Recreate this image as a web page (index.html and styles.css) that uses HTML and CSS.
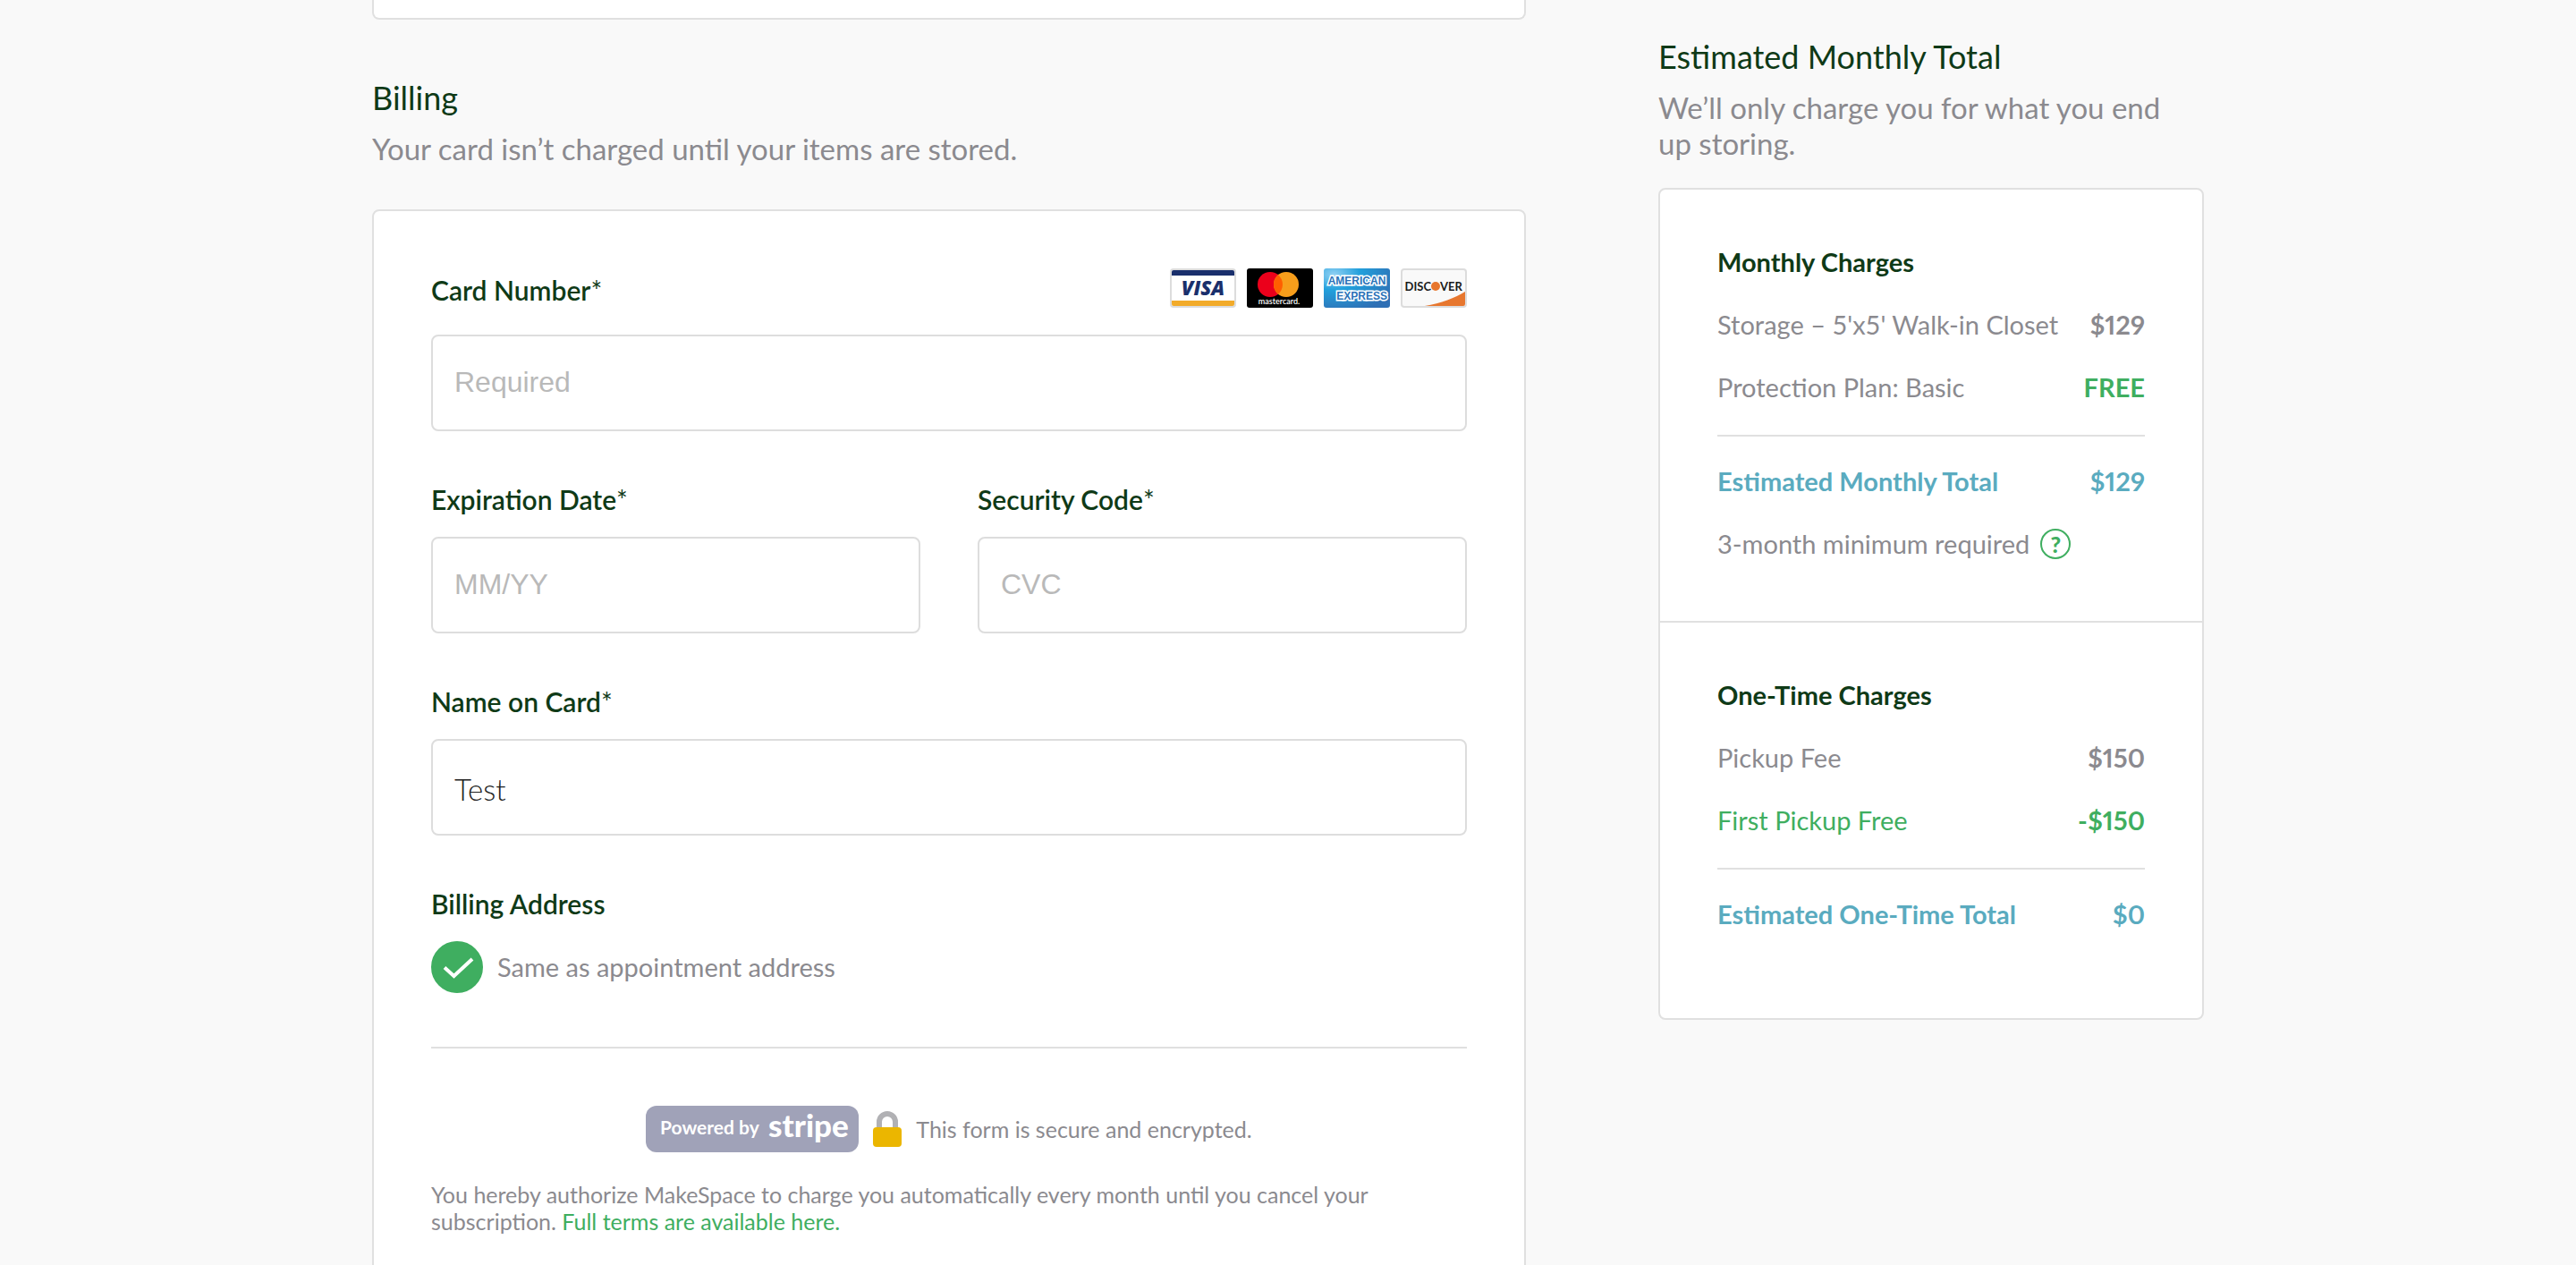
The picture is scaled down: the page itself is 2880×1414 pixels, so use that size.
FILE: index.html
```html
<!DOCTYPE html>
<html lang="en">
<head>
<meta charset="utf-8">
<meta name="viewport" content="width=device-width, initial-scale=1">
<title>Billing</title>
<link rel="stylesheet" href="styles.css">
</head>
<body>
<div class="page">
  <main class="main">
    <div class="card card-previous"></div>
    <section class="section">
      <h2 class="title">Billing</h2>
      <p class="subtitle">Your card isn’t charged until your items are stored.</p>
      <form class="card billing">
        <div class="label-row">
          <label class="label" for="number">Card Number<span class="star">*</span></label>
          <div class="brands">
            <svg width="74" height="44" viewBox="0 0 74 44" role="img" aria-label="Visa">
              <rect width="74" height="44" rx="4" fill="#dcdcdc"/>
              <rect x="2" y="2" width="70" height="40" rx="2" fill="#fff"/>
              <path d="M4 2h66a2 2 0 0 1 2 2v4H2V4a2 2 0 0 1 2-2z" fill="#1a2f6c"/>
              <path d="M2 36h70v4a2 2 0 0 1-2 2H4a2 2 0 0 1-2-2z" fill="#f2ab2a"/>
              <text class="visa" x="37" y="30" text-anchor="middle">VISA</text>
            </svg>
            <svg width="74" height="44" viewBox="0 0 74 44" role="img" aria-label="Mastercard">
              <rect width="74" height="44" rx="3" fill="#000"/>
              <circle cx="26" cy="18" r="14" fill="#eb001b"/>
              <circle cx="44" cy="18" r="14" fill="#f79e1b"/>
              <path d="M35 7.300a14 14 0 0 1 0 21.400a14 14 0 0 1 0-21.400z" fill="#ff5f00"/>
              <text class="mastercard" x="36" y="40" text-anchor="middle">mastercard.</text>
            </svg>
            <svg width="74" height="44" viewBox="0 0 74 44" role="img" aria-label="American Express">
              <defs>
                <radialGradient id="amex" cx="0.150" cy="0.150" r="1">
                  <stop offset="0" stop-color="#8fd0f3"/>
                  <stop offset="0.400" stop-color="#22a0dc"/>
                  <stop offset="1" stop-color="#2f6fb4"/>
                </radialGradient>
              </defs>
              <rect width="74" height="44" rx="3" fill="url(#amex)"/>
              <text class="amex" x="37" y="18" text-anchor="middle">AMERICAN</text>
              <text class="amex" x="71" y="35" text-anchor="end">EXPRESS</text>
            </svg>
            <svg width="74" height="44" viewBox="0 0 74 44" role="img" aria-label="Discover">
              <rect width="74" height="44" rx="4" fill="#dcdcdc"/>
              <rect x="2" y="2" width="70" height="40" rx="2" fill="#f9f9f9"/>
              <path d="M27 42C45 39 61 33 72 26v14a2 2 0 0 1-2 2z" fill="#e7772f"/>
              <text class="discover" x="34" y="25" text-anchor="end">DISC</text>
              <circle cx="39" cy="20" r="5" fill="#e7772f"/>
              <text class="discover" x="44" y="25">VER</text>
            </svg>
          </div>
        </div>
        <input class="input input-first" id="number" type="text" placeholder="Required">

        <div class="pair">
          <div>
            <label class="label" for="expiry">Expiration Date<span class="star">*</span></label>
            <input class="input" id="expiry" type="text" placeholder="MM/YY">
          </div>
          <div>
            <label class="label" for="cvc">Security Code<span class="star">*</span></label>
            <input class="input" id="cvc" type="text" placeholder="CVC">
          </div>
        </div>

        <div class="group">
          <label class="label" for="name">Name on Card<span class="star">*</span></label>
          <input class="input input-name" id="name" type="text" value="Test">
        </div>

        <fieldset class="group address">
          <legend class="label">Billing Address</legend>
          <label class="check-row">
            <span class="check">
              <input class="check-input" type="checkbox" checked>
              <svg class="check-mark" width="58" height="58" viewBox="0 0 58 58" aria-hidden="true">
                <path d="M15 29.500l10.500 9.500L46 20" fill="none" stroke="#fff" stroke-width="4"/>
              </svg>
            </span>
            Same as appointment address
          </label>
        </fieldset>

        <hr class="rule form-rule">

        <div class="secure">
          <svg width="238" height="52" viewBox="0 0 238 52" role="img" aria-label="Powered by Stripe">
            <rect width="238" height="52" rx="12" fill="#a0a2b8"/>
            <text class="powered" x="16" y="32">Powered by</text>
            <text class="stripe" x="137" y="35">stripe</text>
          </svg>
          <svg width="32" height="40" viewBox="0 0 32 40" aria-hidden="true">
            <path d="M7 20V12a9 9 0 0 1 18 0v8" fill="none" stroke="#b1b1b4" stroke-width="6"/>
            <rect y="18" width="32" height="22" rx="4" fill="#ebb600"/>
          </svg>
          <span>This form is secure and encrypted.</span>
        </div>
        <p class="terms">You hereby authorize MakeSpace to charge you automatically every month until you cancel your subscription. <a class="link" href="#terms">Full terms are available here.</a></p>
      </form>
    </section>
  </main>

  <aside class="aside">
    <h2 class="title">Estimated Monthly Total</h2>
    <p class="subtitle">We’ll only charge you for what you end up storing.</p>
    <div class="card summary">
      <section class="charges">
        <h3 class="charges-title">Monthly Charges</h3>
        <dl class="rows">
          <div class="row"><dt>Storage – 5'x5' Walk-in Closet</dt><dd>$129</dd></div>
          <div class="row"><dt>Protection Plan: Basic</dt><dd class="green">FREE</dd></div>
        </dl>
        <hr class="rule">
        <dl class="rows">
          <div class="row total"><dt>Estimated Monthly Total</dt><dd>$129</dd></div>
        </dl>
        <p class="minimum">3-month minimum required <button class="help" type="button" aria-label="About the minimum">?</button></p>
      </section>
      <section class="charges charges-once">
        <h3 class="charges-title">One-Time Charges</h3>
        <dl class="rows">
          <div class="row"><dt>Pickup Fee</dt><dd>$150</dd></div>
          <div class="row green"><dt>First Pickup Free</dt><dd>-$150</dd></div>
        </dl>
        <hr class="rule">
        <dl class="rows">
          <div class="row total"><dt>Estimated One-Time Total</dt><dd>$0</dd></div>
        </dl>
      </section>
    </div>
  </aside>
</div>
</body>
</html>
```
FILE: styles.css
```css
*, *::before, *::after { box-sizing: border-box; }

body {
  margin: 0;
  background: #f9f9f9;
  color: #8b8a8f;
  font-family: Lato, "Liberation Sans", sans-serif;
  font-size: 29px;
  line-height: 40px;
}

h2, h3, p, dl, dd, fieldset, legend { margin: 0; padding: 0; }
fieldset { border: 0; min-width: 0; }

.page {
  display: grid;
  grid-template-columns: minmax(0, 1290fr) minmax(0, 610fr);
  column-gap: 148px;
  max-width: 2048px;
  height: 100vh;
  margin: 0 auto;
  overflow: hidden;
}

.card {
  background: #fff;
  border: 2px solid #e0e0e0;
  border-radius: 8px;
}

.card-previous {
  height: 22px;
  border-top: 0;
  border-radius: 0 0 8px 8px;
}

.section { padding-top: 63px; }
.aside { padding-top: 39px; }

.title {
  color: #0f3a17;
  font-size: 36px;
  font-weight: 400;
  line-height: 48px;
}

.subtitle {
  margin-top: 13px;
  font-size: 33px;
}

.aside .subtitle { padding-right: 32px; }

/* Billing form */
.billing {
  margin-top: 48px;
  padding: 64px;
}

.label-row {
  display: flex;
  align-items: flex-end;
  justify-content: space-between;
}

.label {
  display: block;
  color: #0f3a17;
  font-size: 30px;
  font-weight: 600;
}

.star { font-weight: 400; }

.brands {
  display: flex;
  gap: 12px;
}

.input {
  display: block;
  width: 100%;
  height: 108px;
  margin-top: 22px;
  padding: 0 24px 2px;
  background: #fff;
  border: 2px solid #ddd;
  border-radius: 8px;
  color: #222;
  font-family: "Liberation Sans", Arial, sans-serif;
  font-size: 32px;
}

.input::placeholder { color: #b9b9b9; opacity: 1; }
.input-first { margin-top: 30px; }

.input-name {
  padding-top: 6px;
  font-family: Lato, sans-serif;
  font-size: 33px;
  font-weight: 300;
}

.pair {
  display: grid;
  grid-template-columns: 1fr 1fr;
  column-gap: 64px;
  margin-top: 56px;
}

.group { margin-top: 56px; }

.check-row {
  display: flex;
  align-items: center;
  gap: 16px;
  margin-top: 22px;
}

.check { display: grid; }
.check > * { grid-area: 1 / 1; }

.check-input {
  width: 58px;
  height: 58px;
  margin: 0;
  appearance: none;
  border: 2px solid #ddd;
  border-radius: 50%;
}

.check-input:checked {
  background: #3fae60;
  border-color: #3fae60;
}

.check-mark { pointer-events: none; }

.rule {
  height: 2px;
  margin: 0;
  border: 0;
  background: #e0e0e0;
}

.form-rule { margin-top: 60px; }

.secure {
  display: flex;
  align-items: center;
  justify-content: center;
  gap: 16px;
  margin-top: 64px;
  font-size: 25px;
  line-height: 30px;
}

.terms {
  margin-top: 32px;
  font-size: 25px;
  line-height: 30px;
}

.link {
  color: #3fae60;
  text-decoration: none;
}

/* Card brand and badge lettering */
.visa {
  fill: #1a2f6c;
  font: italic 800 22px "Open Sans", sans-serif;
}

.mastercard {
  fill: #fff;
  font: 600 9px Lato, sans-serif;
}

.amex {
  fill: #2a72b8;
  stroke: #fff;
  stroke-width: 3px;
  paint-order: stroke;
  font: bold 12px "Liberation Sans", sans-serif;
}

.discover {
  fill: #1b1b1b;
  font: 700 13px Lato, sans-serif;
}

.powered {
  fill: #fff;
  font: 700 21px Lato, sans-serif;
}

.stripe {
  fill: #fff;
  font: 900 35px Lato, sans-serif;
}

/* Price summary */
.summary { margin-top: 30px; }

.charges { padding: 61px 64px 66px; }

.charges-once {
  padding-bottom: 96px;
  border-top: 2px solid #e0e0e0;
}

.charges-title {
  color: #0f3a17;
  font-size: 29px;
  font-weight: 700;
  line-height: 40px;
}

.row {
  display: flex;
  justify-content: space-between;
  margin-top: 30px;
}

.row dd {
  font-weight: 700;
  font-variant-numeric: proportional-nums;
}

.charges .rule { margin-top: 33px; }

.total {
  color: #5aabbf;
  font-weight: 700;
}

.green { color: #3fae60; }

.minimum {
  display: flex;
  align-items: center;
  gap: 12px;
  margin-top: 30px;
}

.help {
  width: 34px;
  height: 34px;
  padding: 0;
  background: none;
  border: 2px solid #3fae60;
  border-radius: 50%;
  color: #3fae60;
  font-family: inherit;
  font-size: 25px;
  font-weight: 900;
  line-height: 30px;
}
```
